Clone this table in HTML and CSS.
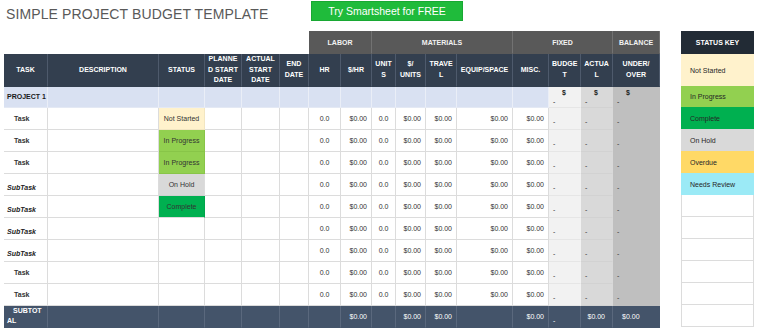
FILE: index.html
```html
<!DOCTYPE html>
<html lang="en">
<head>
<meta charset="utf-8">
<title>Simple Project Budget Template</title>
<link rel="stylesheet" href="styles.css">
</head>
<body>
<div class="page">
  <div class="top">
    <h1 class="title">SIMPLE PROJECT BUDGET TEMPLATE</h1>
    <a class="cta">Try Smartsheet for FREE</a>
  </div>
  <div class="main">
    <table class="budget">
      <colgroup>
        <col class="c-task"><col class="c-desc"><col class="c-status"><col class="c-plan"><col class="c-act"><col class="c-end">
        <col class="c-hr"><col class="c-rate"><col class="c-units"><col class="c-uprice"><col class="c-travel"><col class="c-equip">
        <col class="c-misc"><col class="c-budget"><col class="c-actual"><col class="c-uo">
      </colgroup>
      <tr class="grp">
        <td class="blank"></td><td class="blank"></td><td class="blank"></td><td class="blank"></td><td class="blank"></td><td class="blank"></td>
        <th colspan="2">LABOR</th>
        <th colspan="4">MATERIALS</th>
        <th colspan="3">FIXED</th>
        <th>BALANCE</th>
      </tr>
      <tr class="hdr">
        <th>TASK</th><th>DESCRIPTION</th><th>STATUS</th><th>PLANNE<br>D START<br>DATE</th><th>ACTUAL<br>START<br>DATE</th><th>END<br>DATE</th>
        <th>HR</th><th>$/HR</th><th>UNIT<br>S</th><th>$/<br>UNITS</th><th>TRAVE<br>L</th><th>EQUIP/SPACE</th>
        <th>MISC.</th><th>BUDGE<br>T</th><th>ACTUA<br>L</th><th>UNDER/<br>OVER</th>
      </tr>
      <tr class="proj">
        <td class="name">PROJECT 1</td><td></td><td></td><td></td><td></td><td></td><td></td><td></td><td></td><td></td><td></td><td></td><td></td>
        <td class="fx bud"><span class="dol">$</span><span class="dash">-</span></td>
        <td class="fx act"><span class="dol">$</span><span class="dash">-</span></td>
        <td class="fx uo"><span class="dol">$</span><span class="dash">-</span></td>
      </tr>
      <tr class="row">
        <td class="task">Task</td><td></td><td class="st ns">Not Started</td><td></td><td></td><td></td>
        <td class="c">0.0</td><td class="m">$0.00</td><td class="c">0.0</td><td class="m">$0.00</td><td class="m">$0.00</td><td class="m">$0.00</td><td class="m">$0.00</td>
        <td class="fx bud">-</td><td class="fx act">-</td><td class="fx uo">-</td>
      </tr>
      <tr class="row">
        <td class="task">Task</td><td></td><td class="st ip">In Progress</td><td></td><td></td><td></td>
        <td class="c">0.0</td><td class="m">$0.00</td><td class="c">0.0</td><td class="m">$0.00</td><td class="m">$0.00</td><td class="m">$0.00</td><td class="m">$0.00</td>
        <td class="fx bud">-</td><td class="fx act">-</td><td class="fx uo">-</td>
      </tr>
      <tr class="row">
        <td class="task">Task</td><td></td><td class="st ip">In Progress</td><td></td><td></td><td></td>
        <td class="c">0.0</td><td class="m">$0.00</td><td class="c">0.0</td><td class="m">$0.00</td><td class="m">$0.00</td><td class="m">$0.00</td><td class="m">$0.00</td>
        <td class="fx bud">-</td><td class="fx act">-</td><td class="fx uo">-</td>
      </tr>
      <tr class="row">
        <td class="sub">SubTask</td><td></td><td class="st oh">On Hold</td><td></td><td></td><td></td>
        <td class="c">0.0</td><td class="m">$0.00</td><td class="c">0.0</td><td class="m">$0.00</td><td class="m">$0.00</td><td class="m">$0.00</td><td class="m">$0.00</td>
        <td class="fx bud">-</td><td class="fx act">-</td><td class="fx uo">-</td>
      </tr>
      <tr class="row">
        <td class="sub">SubTask</td><td></td><td class="st cp">Complete</td><td></td><td></td><td></td>
        <td class="c">0.0</td><td class="m">$0.00</td><td class="c">0.0</td><td class="m">$0.00</td><td class="m">$0.00</td><td class="m">$0.00</td><td class="m">$0.00</td>
        <td class="fx bud">-</td><td class="fx act">-</td><td class="fx uo">-</td>
      </tr>
      <tr class="row">
        <td class="sub">SubTask</td><td></td><td></td><td></td><td></td><td></td>
        <td class="c">0.0</td><td class="m">$0.00</td><td class="c">0.0</td><td class="m">$0.00</td><td class="m">$0.00</td><td class="m">$0.00</td><td class="m">$0.00</td>
        <td class="fx bud">-</td><td class="fx act">-</td><td class="fx uo">-</td>
      </tr>
      <tr class="row">
        <td class="sub">SubTask</td><td></td><td></td><td></td><td></td><td></td>
        <td class="c">0.0</td><td class="m">$0.00</td><td class="c">0.0</td><td class="m">$0.00</td><td class="m">$0.00</td><td class="m">$0.00</td><td class="m">$0.00</td>
        <td class="fx bud">-</td><td class="fx act">-</td><td class="fx uo">-</td>
      </tr>
      <tr class="row">
        <td class="task">Task</td><td></td><td></td><td></td><td></td><td></td>
        <td class="c">0.0</td><td class="m">$0.00</td><td class="c">0.0</td><td class="m">$0.00</td><td class="m">$0.00</td><td class="m">$0.00</td><td class="m">$0.00</td>
        <td class="fx bud">-</td><td class="fx act">-</td><td class="fx uo">-</td>
      </tr>
      <tr class="row">
        <td class="task">Task</td><td></td><td></td><td></td><td></td><td></td>
        <td class="c">0.0</td><td class="m">$0.00</td><td class="c">0.0</td><td class="m">$0.00</td><td class="m">$0.00</td><td class="m">$0.00</td><td class="m">$0.00</td>
        <td class="fx bud">-</td><td class="fx act">-</td><td class="fx uo">-</td>
      </tr>
      <tr class="tot">
        <td class="totname">SUBTOTAL</td><td></td><td></td><td></td><td></td><td></td>
        <td></td><td class="m">$0.00</td><td></td><td class="m">$0.00</td><td class="m">$0.00</td><td></td><td class="m">$0.00</td>
        <td class="fx">-</td><td class="m tact">$0.00</td><td class="tuo">$0.00</td>
      </tr>
    </table>

    <table class="key">
      <tr class="k-g"><th>STATUS KEY</th></tr>
      <tr class="k-h"><td class="k-ns">Not Started</td></tr>
      <tr class="k-p"><td class="k-ip">In Progress</td></tr>
      <tr class="k-r"><td class="k-cp">Complete</td></tr>
      <tr class="k-r"><td class="k-oh">On Hold</td></tr>
      <tr class="k-r"><td class="k-od">Overdue</td></tr>
      <tr class="k-r"><td class="k-nr">Needs Review</td></tr>
      <tr class="k-r"><td class="k-empty"></td></tr>
      <tr class="k-r"><td class="k-empty"></td></tr>
      <tr class="k-r"><td class="k-empty"></td></tr>
      <tr class="k-r"><td class="k-empty"></td></tr>
      <tr class="k-r"><td class="k-empty"></td></tr>
      <tr class="k-r"><td class="k-empty"></td></tr>
    </table>
  </div>
</div>
</body>
</html>
```
FILE: styles.css
```css
* { box-sizing: border-box; }

body {
  margin: 0;
  background: #ffffff;
  font-family: "Liberation Sans", Arial, sans-serif;
  color: #222222;
}

.page { padding: 0 4px; }

.top {
  display: flex;
  align-items: flex-start;
  height: 31px;
}

.title {
  flex: 0 0 305px;
  margin: 7px 0 0 2px;
  font-size: 14px;
  line-height: 14px;
  font-weight: normal;
  letter-spacing: 0.12px;
  color: #595959;
}

.cta {
  display: flex;
  align-items: center;
  justify-content: center;
  width: 152px;
  height: 20px;
  margin-top: 1px;
  background: #1fbb3b;
  border: 1px solid #18a833;
  color: #ffffff;
  font-size: 10.5px;
}

.main {
  display: flex;
  align-items: flex-start;
  gap: 21px;
}

table {
  border-collapse: separate;
  border-spacing: 0;
  table-layout: fixed;
  font-size: 7px;
}

.budget { width: 656px; }
.key { width: 73px; }

.c-task { width: 44px; }
.c-desc { width: 111px; }
.c-status { width: 46px; }
.c-plan { width: 37px; }
.c-act { width: 38px; }
.c-end { width: 29px; }
.c-hr { width: 32px; }
.c-rate { width: 31px; }
.c-units { width: 24px; }
.c-uprice { width: 30px; }
.c-travel { width: 31px; }
.c-equip { width: 56px; }
.c-misc { width: 36px; }
.c-budget { width: 32px; }
.c-actual { width: 32px; }
.c-uo { width: 47px; }

td, th {
  padding: 0 3px;
  overflow: hidden;
  white-space: nowrap;
  line-height: 9px;
  border-right: 1px solid #dcdcdc;
  border-bottom: 1px solid #dcdcdc;
  vertical-align: middle;
}

.grp, .k-g { height: 23px; }
.hdr, .k-h { height: 32px; }
.proj, .k-p { height: 21px; }
.row, .tot, .k-r { height: 22px; }

/* group header */
.grp .blank { border: none; background: #ffffff; }
.grp th {
  background: #595959;
  color: #f2f2f2;
  font-weight: bold;
  text-align: center;
  border-right: 1px solid #727272;
  border-bottom: 1px solid #595959;
}

/* column header */
.hdr th {
  background: #333f4f;
  color: #ffffff;
  font-weight: bold;
  text-align: center;
  line-height: 10.5px;
  border-right: 1px solid #4e5a6c;
  border-bottom: 1px solid #333f4f;
}

/* project row */
.proj td {
  background: #d9e1f2;
  border-right-color: #eaeef7;
  border-bottom-color: #e4e9f4;
}
.proj .name { font-weight: bold; color: #1a1a1a; }

/* body rows */
.row td { color: #333333; }
.task { padding-left: 10px; font-weight: bold; color: #222222; }
.budget .sub {
  font-weight: bold;
  font-style: italic;
  color: #222222;
  vertical-align: bottom;
  padding-bottom: 3px;
}
.c { text-align: center; }
.m { text-align: right; padding-right: 4px; }

.st { text-align: center; }
.ns, .k-ns { background: #fff2cc; }
.ip, .k-ip { background: #92d050; }
.cp, .k-cp { background: #00b050; }
.oh, .k-oh { background: #d9d9d9; }
.k-od { background: #ffd966; }
.k-nr { background: #9beaf6; }

.row .st.ns { border-right-color: #f2e6c2; border-bottom-color: #f2e6c2; }
.row .st.ip { border-right-color: #88c548; border-bottom-color: #88c548; }
.row .st.cp { border-right-color: #00a54b; }
.row .st.oh { border-bottom-color: #d0d0d0; }

/* fixed columns */
.fx {
  vertical-align: bottom;
  padding: 0 0 3px 4px;
  line-height: 8px;
}
.proj .bud, .row .bud { background: #f2f2f2; border-right-color: #f2f2f2; border-bottom-color: #e6e6e6; }
.proj .act, .row .act { background: #d9d9d9; border-right-color: #d9d9d9; border-bottom-color: #d2d2d2; }
.proj .uo, .row .uo { background: #bfbfbf; border-right-color: #bfbfbf; border-bottom-color: #bfbfbf; }
.dol { display: block; padding-left: 9px; font-weight: bold; color: #222222; }
.dash { display: block; }
.proj .fx { padding-bottom: 1px; line-height: 9px; }

/* subtotal */
.tot td {
  background: #44546a;
  color: #ffffff;
  border-right-color: #5a687d;
  border-bottom-color: #44546a;
}
.totname {
  font-weight: bold;
  white-space: normal;
  word-break: break-all;
  text-indent: 6px;
  line-height: 10px;
}
.tot .tact { padding-right: 7px; }
.tot .tuo { padding-left: 9px; border-right: none; }
.tot .fx { padding-bottom: 2px; }

/* status key */
.key th {
  background: #222b35;
  color: #ffffff;
  font-weight: bold;
  text-align: center;
  border: none;
}
.key td {
  padding-left: 9px;
  color: #262626;
  border: none;
}
.key .k-empty {
  border-left: 1px solid #dcdcdc;
  border-right: 1px solid #dcdcdc;
  border-bottom: 1px solid #dcdcdc;
  background: #ffffff;
}
```
